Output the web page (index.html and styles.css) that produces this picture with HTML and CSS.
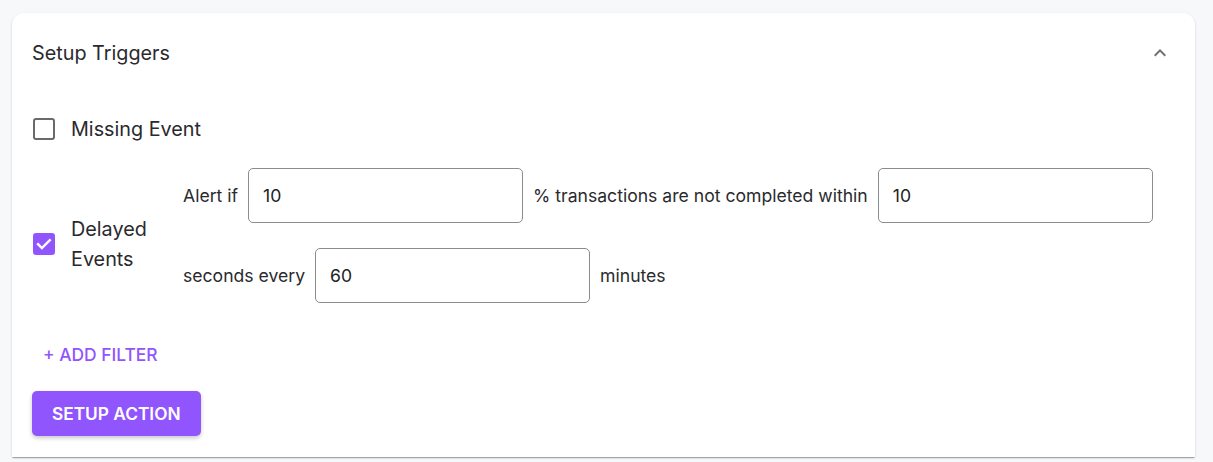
FILE: index.html
```html
<!DOCTYPE html>
<html>
<head>
<meta charset="utf-8">
<link rel="stylesheet" href="styles.css">
</head>
<body>
<div class="card">
  <div class="summary">
    <span class="title">Setup Triggers</span>
    <svg class="chev" viewBox="0 0 24 24" width="24" height="24"><path d="M12 8l-6 6 1.41 1.41L12 10.83l4.59 4.58L18 14z" fill="#6f6f6f"/></svg>
  </div>
  <div class="details">
    <div class="row-missing">
      <span class="box"></span>
      <span class="label">Missing Event</span>
    </div>
    <div class="row-delayed">
      <span class="box checked"><svg viewBox="0 0 24 24" width="22" height="22"><path d="M5.5 12.2l4.2 4.2 8.6-8.6" fill="none" stroke="#fff" stroke-width="2.6" stroke-linecap="square"/></svg></span>
      <span class="label narrow">Delayed Events</span>
      <div class="fields">
        <span class="txt">Alert if</span>
        <div class="input">10</div>
        <span class="txt">% transactions are not completed within</span>
        <div class="input">10</div>
        <span class="txt">seconds every</span>
        <div class="input">60</div>
        <span class="txt">minutes</span>
      </div>
    </div>
    <button class="add">+ Add Filter</button>
    <button class="action">Setup Action</button>
  </div>
</div>
</body>
</html>
```

FILE: styles.css
```css
html, body { margin: 0; padding: 0; }
body {
  background: #f7f8fa;
  font-family: Inter, "Noto Sans", sans-serif;
  color: #2a2a2e;
  width: 1213px;
  height: 462px;
  overflow: hidden;
}
.card {
  margin: 13px 0 0 12px;
  width: 1183px;
  height: 444px;
  background: #fff;
  border-radius: 12px 12px 0 0;
  box-shadow: 0 2px 1px -1px rgba(0,0,0,0.2), 0 1px 1px 0 rgba(0,0,0,0.14), 0 1px 3px 0 rgba(0,0,0,0.12);
  box-sizing: border-box;
}
.summary {
  height: 80px;
  display: flex;
  align-items: center;
  justify-content: space-between;
  padding: 0 23px 0 20px;
}
.title { font-size: 19.8px; }
.chev { display: block; }
.details {
  padding: 15px 20px 20px 20px;
  display: flex;
  flex-direction: column;
  align-items: flex-start;
}
.row-missing {
  display: flex;
  align-items: center;
  height: 42px;
}
.box {
  width: 22px;
  height: 22px;
  margin-left: 1px;
  box-sizing: border-box;
  border: 2.5px solid #6a6a6a;
  border-radius: 3px;
  flex: none;
  display: flex;
  align-items: center;
  justify-content: center;
}
.box.checked {
  background: #9155fd;
  border-color: #9155fd;
}
.box.checked svg { flex: none; }
.label {
  font-size: 19.8px;
  margin-left: 16px;
  line-height: 30px;
}
.label.narrow { width: 100px; }
.row-delayed {
  display: flex;
  align-items: center;
  margin-top: 18px;
}
.fields {
  margin-left: 12px;
  width: 992px;
  display: flex;
  flex-wrap: wrap;
  align-items: center;
  column-gap: 10px;
  row-gap: 25px;
  padding-bottom: 16px;
}
.txt { font-size: 17.6px; }
.input {
  width: 275px;
  height: 55px;
  box-sizing: border-box;
  border: 1px solid #8c8c8c;
  border-radius: 5px;
  padding: 0 14px;
  display: flex;
  align-items: center;
  font-size: 17.6px;
  color: #222;
}
button {
  font-family: Inter, "Noto Sans", sans-serif;
  text-transform: uppercase;
  font-size: 17.6px;
  border: none;
  cursor: pointer;
}
.add {
  margin-top: 17px;
  background: none;
  color: #9155fd;
  font-weight: 500;
  padding: 0 11px;
  height: 36px;
  font-size: 17.4px;
}
.action {
  margin-top: 19px;
  background: #9155fd;
  color: #fff;
  font-weight: 600;
  height: 45px;
  padding: 0 20px;
  font-size: 17.3px;
  border-radius: 5px;
  box-shadow: 0 2px 4px rgba(0,0,0,0.22);
}
```
